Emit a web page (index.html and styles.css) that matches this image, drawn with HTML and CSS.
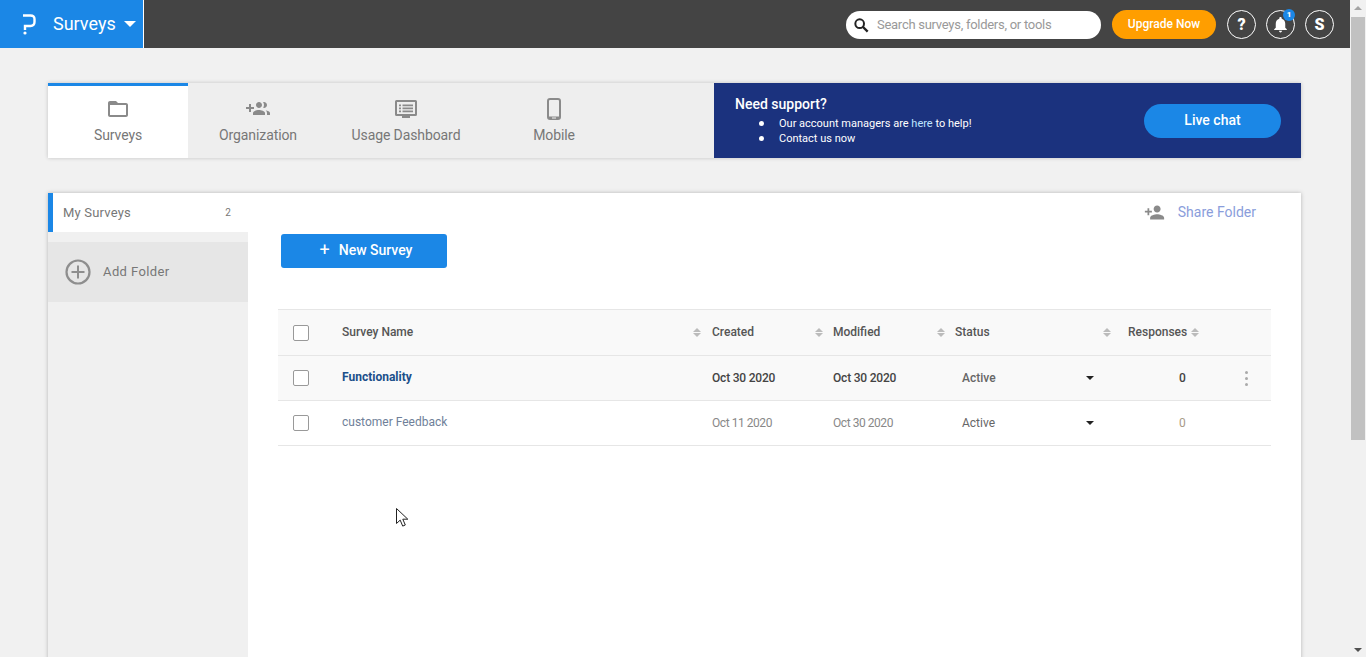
FILE: index.html
```html
<!DOCTYPE html>
<html lang="en">
<head>
    <meta charset="UTF-8">
    <meta name="viewport" content="width=device-width, initial-scale=1.0">
    <title>Surveys</title>
    <link rel="stylesheet" href="styles.css">
</head>
<body>
    <div class="page">
        <header class="topbar">
            <div class="brand">
                <svg class="logo" viewBox="0 0 16 22" width="16" height="22">
                    <path d="M2 2.500H9.500Q13.500 2.500 13.500 6V9Q13.500 13 9.500 13H4V17" fill="none" stroke="#fff" stroke-width="2.400"/>
                    <circle cx="4" cy="20" r="1.600" fill="#fff"/>
                </svg>
                <span class="brand-name">Surveys</span>
                <span class="brand-caret"></span>
            </div>
            <div class="topbar-right">
                <div class="search">
                    <svg viewBox="0 0 24 24" width="16" height="16">
                        <circle cx="10" cy="10" r="6.500" fill="none" stroke="#222" stroke-width="3"/>
                        <path d="M15 15l7 7" stroke="#222" stroke-width="3.500"/>
                    </svg>
                    <span>Search surveys, folders, or tools</span>
                </div>
                <button class="upgrade">Upgrade Now</button>
                <div class="round-btn">?</div>
                <div class="round-btn">
                    <svg viewBox="0 0 24 24" width="19" height="19"><path fill="#fff" d="M12 22c1.100 0 2-.9 2-2h-4c0 1.100.89 2 2 2zm6-6v-5c0-3.070-1.640-5.640-4.500-6.320V4c0-.83-.67-1.500-1.500-1.500s-1.500.67-1.500 1.500v.68C7.630 5.360 6 7.920 6 11v5l-2 2v1h16v-1l-2-2z"/></svg>
                    <span class="badge">1</span>
                </div>
                <div class="round-btn">S</div>
            </div>
        </header>

        <main class="content">
            <section class="tabs-card">
                <nav class="tabs">
                    <div class="tab active">
                        <svg viewBox="0 0 24 24" width="24" height="24"><path d="M20 6h-8l-2-2H4c-1.100 0-1.990.9-1.990 2L2 18c0 1.100.9 2 2 2h16c1.100 0 2-.9 2-2V8c0-1.100-.9-2-2-2zm0 12H4V8h16v10z"/></svg>
                        <span>Surveys</span>
                    </div>
                    <div class="tab">
                        <svg viewBox="0 0 24 24" width="24" height="24"><path d="M8 10H5V7H3v3H0v2h3v3h2v-3h3v-2zm10 1c1.660 0 2.990-1.340 2.990-3S19.660 5 18 5c-.32 0-.63.05-.91.14.57.81.9 1.790.9 2.860s-.34 2.040-.9 2.860c.28.09.59.14.91.14zm-5 0c1.660 0 2.990-1.340 2.990-3S14.660 5 13 5s-3 1.340-3 3 1.340 3 3 3zm6.620 2.160c.83.73 1.380 1.660 1.380 2.840v2h3v-2c0-1.540-2.370-2.490-4.380-2.840zM13 13c-2 0-6 1-6 3v2h12v-2c0-2-4-3-6-3z"/></svg>
                        <span>Organization</span>
                    </div>
                    <div class="tab tab-wide">
                        <svg viewBox="0 0 24 24" width="24" height="24">
                            <path d="M2.500 3h19a1.500 1.500 0 0 1 1.500 1.500v13a1.500 1.500 0 0 1-1.500 1.500H16v2H8v-2H2.500A1.500 1.500 0 0 1 1 17.500v-13A1.500 1.500 0 0 1 2.500 3zM3 5v12h18V5H3z"/>
                            <path d="M5 7.500h2v1.700H5zM8.500 7.500H19v1.700H8.500zM5 10.500h2v1.700H5zM8.500 10.500H19v1.700H8.500zM5 13.500h2v1.700H5zM8.500 13.500H19v1.700H8.500z"/>
                        </svg>
                        <span>Usage Dashboard</span>
                    </div>
                    <div class="tab">
                        <svg viewBox="0 0 24 24" width="24" height="24"><path d="M8 1h8a3 3 0 0 1 3 3v16a3 3 0 0 1-3 3H8a3 3 0 0 1-3-3V4a3 3 0 0 1 3-3zM7 4v15.500h10V4a1 1 0 0 0-1-1H8a1 1 0 0 0-1 1zm3 16.500V21.500h4v-1z"/></svg>
                        <span>Mobile</span>
                    </div>
                </nav>
                <div class="support">
                    <div class="support-text">
                        <h3>Need support?</h3>
                        <ul>
                            <li>Our account managers are <em>here</em> to help!</li>
                            <li>Contact us now</li>
                        </ul>
                    </div>
                    <button class="live-chat">Live chat</button>
                </div>
            </section>

            <section class="surveys-card">
                <aside class="sidebar">
                    <div class="folder">
                        <span>My Surveys</span>
                        <span class="folder-count">2</span>
                    </div>
                    <div class="add-folder">
                        <svg viewBox="0 0 26 26" width="26" height="26">
                            <circle cx="13" cy="13" r="11.500" fill="none" stroke="#8e8e8e" stroke-width="2.200"/>
                            <path d="M13 6.500v13M6.500 13h13" stroke="#8e8e8e" stroke-width="2"/>
                        </svg>
                        <span>Add Folder</span>
                    </div>
                </aside>
                <div class="surveys-main">
                    <div class="share">
                        <svg viewBox="0 0 24 24" width="21" height="21"><path d="M15 12c2.210 0 4-1.790 4-4s-1.790-4-4-4-4 1.790-4 4 1.790 4 4 4zm-9-2V7H4v3H1v2h3v3h2v-3h3v-2H6zm9 4c-2.670 0-8 1.340-8 4v2h16v-2c0-2.660-5.330-4-8-4z"/></svg>
                        <span>Share Folder</span>
                    </div>
                    <button class="new-survey"><span class="plus">+</span>New Survey</button>

                    <div class="table">
                        <div class="row head">
                            <div class="cell-check"><span class="checkbox"></span></div>
                            <div class="sortable sortable-name">Survey Name<span class="sort"></span></div>
                            <div class="sortable">Created<span class="sort"></span></div>
                            <div class="sortable">Modified<span class="sort"></span></div>
                            <div class="sortable sortable-status">Status<span class="sort"></span></div>
                            <div class="sortable-near">Responses<span class="sort"></span></div>
                            <div></div>
                        </div>
                        <div class="row strong">
                            <div class="cell-check"><span class="checkbox"></span></div>
                            <div class="name">Functionality</div>
                            <div>Oct 30 2020</div>
                            <div>Oct 30 2020</div>
                            <div class="status">Active<span class="caret"></span></div>
                            <div class="responses">0</div>
                            <div class="kebab"><i></i><i></i><i></i></div>
                        </div>
                        <div class="row">
                            <div class="cell-check"><span class="checkbox"></span></div>
                            <div class="name">customer Feedback</div>
                            <div>Oct 11 2020</div>
                            <div>Oct 30 2020</div>
                            <div class="status">Active<span class="caret"></span></div>
                            <div class="responses">0</div>
                            <div></div>
                        </div>
                    </div>
                </div>
            </section>
        </main>
    </div>

    <div class="scrollbar">
        <span class="arrow-up"></span>
        <div class="thumb"></div>
        <span class="arrow-down"></span>
    </div>

    <svg class="cursor" viewBox="0 0 13 19" width="13" height="19">
        <path d="M.5.5v15l3.700-3.400 2.500 6 2.600-1.100-2.500-5.800h5z" fill="#fff" stroke="#222" stroke-width="1"/>
    </svg>
</body>
</html>
```

FILE: styles.css
```css
* {
    box-sizing: border-box;
}
body {
    margin: 0;
    display: flex;
    height: 100vh;
    overflow: hidden;
    background-color: #f1f1f1;
    font-family: 'Roboto', 'Noto Sans', sans-serif;
    color: #777;
}
button {
    font-family: inherit;
    border: none;
    cursor: pointer;
}
.page {
    flex: 1;
    min-width: 0;
    height: 100vh;
    overflow: hidden;
}

/* top bar */
.topbar {
    display: flex;
    justify-content: space-between;
    align-items: center;
    height: 48px;
    padding-right: 16px;
    background-color: #444;
}
.brand {
    display: flex;
    align-items: center;
    width: 144px;
    height: 48px;
    padding-left: 21px;
    background-color: #1b87e6;
    border-right: 1px solid #fff;
    color: #fff;
}
.logo {
    flex: none;
}
.brand-name {
    margin-left: 16px;
    padding-bottom: 2px;
    font-size: 18px;
}
.brand-caret {
    margin-left: 8px;
    border-left: 6px solid transparent;
    border-right: 6px solid transparent;
    border-top: 6px solid #fff;
}
.topbar-right {
    display: flex;
    align-items: center;
    gap: 10px;
}
.search {
    display: flex;
    align-items: center;
    gap: 8px;
    width: 255px;
    height: 28px;
    padding-left: 7px;
    margin: 1px 1px 0 0;
    border-radius: 14px;
    background-color: #fff;
    font-size: 13px;
    letter-spacing: -0.27px;
    color: #999;
}
.upgrade {
    width: 104px;
    height: 29px;
    margin-right: 1px;
    padding-bottom: 2px;
    border-radius: 15px;
    background-color: #ff9e00;
    color: #fff;
    font-size: 12px;
    font-weight: 500;
}
.round-btn {
    position: relative;
    display: flex;
    justify-content: center;
    align-items: center;
    width: 29px;
    height: 29px;
    border: 1px solid #fff;
    border-radius: 50%;
    color: #fff;
    font-size: 16px;
    font-weight: 900;
}
.badge {
    position: absolute;
    top: -2px;
    right: -1px;
    width: 12px;
    height: 12px;
    border-radius: 50%;
    background-color: #1b87e6;
    font-size: 8px;
    line-height: 12px;
    text-align: center;
}

/* page body */
.content {
    padding: 35px 49px 0 48px;
}
.tabs-card {
    display: flex;
    height: 75px;
    box-shadow: 0 0 4px rgba(0,0,0,0.2);
    background-color: #eee;
}
.tabs {
    display: flex;
    width: 666px;
}
.tab {
    display: flex;
    flex-direction: column;
    align-items: center;
    width: 140px;
    padding-top: 14px;
    font-size: 14px;
    letter-spacing: -0.1px;
}
.tab svg {
    margin-bottom: 6px;
    fill: #8a8a8a;
}
.tab-wide {
    width: 156px;
}
.tab.active {
    padding-top: 11px;
    border-top: 3px solid #1b87e6;
    background-color: #fff;
}
.support {
    flex: 1;
    display: flex;
    justify-content: space-between;
    align-items: center;
    padding: 0 20px 0 21px;
    background-color: #1b327e;
    color: #fff;
}
.support h3 {
    margin: 0 0 4px;
    font-size: 14px;
    font-weight: 500;
}
.support ul {
    margin: 0;
    padding-left: 24px;
    list-style: none;
    font-size: 11px;
    line-height: 15px;
}
.support li {
    display: flex;
    align-items: center;
    white-space: pre;
}
.support li::before {
    content: "";
    width: 5px;
    height: 5px;
    margin-right: 15px;
    border-radius: 50%;
    background-color: #fff;
}
.support em {
    font-style: normal;
    color: #bfe4ff;
}
.live-chat {
    width: 137px;
    height: 34px;
    padding-bottom: 2px;
    border-radius: 17px;
    background-color: #1b87e6;
    color: #fff;
    font-size: 14px;
    font-weight: 500;
}

.surveys-card {
    display: flex;
    height: 600px;
    margin-top: 35px;
    box-shadow: 0 0 4px rgba(0,0,0,0.25);
    background-color: #fff;
}
.sidebar {
    flex: none;
    width: 200px;
    background-color: #f0f0f0;
}
.folder {
    display: flex;
    justify-content: space-between;
    align-items: center;
    height: 39px;
    padding: 0 17px 0 10px;
    border-left: 5px solid #1b87e6;
    background-color: #fff;
    font-size: 13px;
    letter-spacing: 0.2px;
}
.folder-count {
    font-size: 10px;
}
.add-folder {
    display: flex;
    align-items: center;
    gap: 12px;
    height: 60px;
    margin-top: 10px;
    padding-left: 17px;
    background-color: #e6e6e6;
    font-size: 13px;
    letter-spacing: 0.4px;
}
.add-folder span {
    padding-bottom: 2px;
}
.surveys-main {
    flex: 1;
    min-width: 0;
}
.share {
    display: flex;
    justify-content: flex-end;
    align-items: center;
    gap: 13px;
    height: 41px;
    padding: 0 45px 2px 0;
    font-size: 14px;
    color: #8a9ddb;
}
.share span {
    padding-bottom: 2px;
}
.share svg {
    fill: #8a8a8a;
}
.new-survey {
    display: block;
    width: 166px;
    height: 34px;
    margin-left: 33px;
    padding: 0 0 3px 4px;
    border-radius: 3px;
    background-color: #1b87e6;
    color: #fff;
    font-size: 14px;
    font-weight: 500;
}
.plus {
    margin-right: 9px;
    font-size: 18px;
    font-weight: 400;
    vertical-align: -1px;
}

/* table */
.table {
    margin: 41px 30px 0;
    border-top: 1px solid #e6e6e6;
}
.row {
    display: grid;
    grid-template-columns: 64px 370px 121px 122px 173px 102px 41px;
    align-items: center;
    height: 45px;
    border-bottom: 1px solid #e6e6e6;
    font-size: 12px;
    letter-spacing: -0.45px;
    color: #888;
}
.head {
    height: 46px;
    background-color: #f9f9f9;
    font-weight: 500;
    letter-spacing: 0;
    color: #555;
}
.head > div {
    padding-bottom: 2px;
}
.head > .cell-check {
    padding-bottom: 0;
}
.strong {
    background-color: #f9f9f9;
    font-weight: 500;
    letter-spacing: -0.2px;
    color: #444;
}
.cell-check {
    padding-left: 15px;
    line-height: 0;
}
.checkbox {
    display: inline-block;
    width: 16px;
    height: 16px;
    border: 1px solid #999;
    border-radius: 2px;
    background-color: #fff;
}
.sortable {
    display: flex;
    justify-content: space-between;
    align-items: center;
    padding-right: 10px;
}
.sortable-name {
    padding-right: 11px;
}
.sortable-status {
    padding-right: 17px;
}
.sortable-near {
    display: flex;
    align-items: center;
    gap: 4px;
}
.sort {
    display: flex;
    flex-direction: column;
    gap: 1px;
    margin-top: 2px;
}
.sort::before,
.sort::after {
    content: "";
    border-left: 4px solid transparent;
    border-right: 4px solid transparent;
}
.sort::before {
    border-bottom: 4px solid #bbb;
}
.sort::after {
    border-top: 4px solid #bbb;
}
.name {
    padding-bottom: 2px;
    letter-spacing: 0;
    color: #6f7f99;
}
.strong .name {
    font-weight: 700;
    color: #1b4f8a;
}
.status {
    display: flex;
    justify-content: space-between;
    align-items: center;
    padding: 0 34px 0 7px;
    letter-spacing: 0;
    color: #666;
}
.caret {
    border-left: 4px solid transparent;
    border-right: 4px solid transparent;
    border-top: 4px solid #222;
}
.responses {
    padding-left: 51px;
    color: #a89a88;
}
.strong .responses {
    color: #444;
}
.kebab {
    display: flex;
    flex-direction: column;
    gap: 3px;
    padding-left: 15px;
}
.kebab i {
    width: 3px;
    height: 3px;
    border-radius: 50%;
    background-color: #aaa;
}

/* scrollbar */
.scrollbar {
    position: relative;
    flex: none;
    width: 16px;
    padding: 17px 1px;
    background-color: #f1f1f1;
}
.thumb {
    height: 423px;
    background-color: #c1c1c1;
}
.arrow-up,
.arrow-down {
    position: absolute;
    left: 4px;
    border-left: 4px solid transparent;
    border-right: 4px solid transparent;
}
.arrow-up {
    top: 6px;
    border-bottom: 4px solid #a3a3a3;
}
.arrow-down {
    bottom: 5px;
    border-top: 4px solid #505050;
}

.cursor {
    position: absolute;
    left: 396px;
    top: 508px;
}
```
